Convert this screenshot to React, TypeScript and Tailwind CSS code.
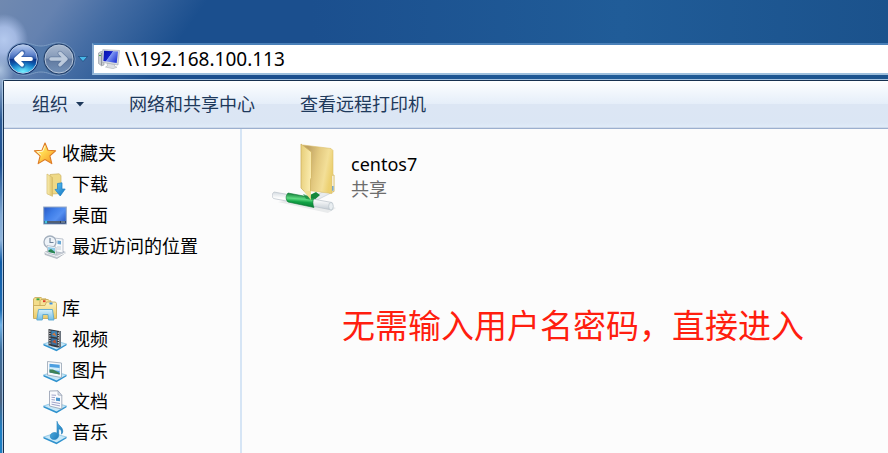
import React from "react";

function BackButton() {
  return (
    <button type="button" aria-label="后退" className="relative size-[32px] shrink-0">
      <svg viewBox="0 0 32 32" className="size-full" aria-hidden="true">
        <defs>
          <linearGradient id="backBase" x1="0" y1="0" x2="0" y2="1">
            <stop offset="0" stopColor="#b9cdef" />
            <stop offset="0.3" stopColor="#6d8fd2" />
            <stop offset="0.48" stopColor="#3a62b4" />
            <stop offset="0.5" stopColor="#0b2f86" />
            <stop offset="0.72" stopColor="#0d66b8" />
            <stop offset="1" stopColor="#3fd4f8" />
          </linearGradient>
          <radialGradient id="backGlow" cx="0.5" cy="1" r="0.5">
            <stop offset="0" stopColor="#7df4ff" />
            <stop offset="1" stopColor="#1fa5e8" stopOpacity="0" />
          </radialGradient>
        </defs>
        <circle cx="16" cy="16" r="15.5" fill="#17336a" />
        <circle cx="16" cy="16" r="14.2" fill="url(#backBase)" stroke="#b5cbe8" strokeWidth="1" />
        <circle cx="16" cy="16" r="13.5" fill="url(#backGlow)" />
        <path d="M25 16H9M15.5 9.5 8.8 16l6.7 6.5" fill="none" stroke="#1c4a94" strokeWidth="5.4" strokeLinecap="round" strokeLinejoin="round" opacity="0.5" />
        <path d="M24 16H9.5M15 10.3 9 16l6 5.7" fill="none" stroke="#fff" strokeWidth="3.8" strokeLinecap="round" strokeLinejoin="round" />
      </svg>
    </button>
  );
}

function ForwardButton() {
  return (
    <button type="button" aria-label="前进" className="relative size-[32px] shrink-0">
      <svg viewBox="0 0 32 32" className="size-full" aria-hidden="true">
        <defs>
          <linearGradient id="fwdBase" x1="0" y1="0" x2="0" y2="1">
            <stop offset="0" stopColor="#a9b9cf" />
            <stop offset="0.47" stopColor="#8499b8" />
            <stop offset="0.5" stopColor="#61799f" />
            <stop offset="1" stopColor="#7391b8" />
          </linearGradient>
        </defs>
        <circle cx="16" cy="16" r="15.5" fill="#28456f" />
        <circle cx="16" cy="16" r="14" fill="url(#fwdBase)" stroke="#b7c6da" strokeWidth="1" />
        <path d="M8 16H23M17 10.300 23 16l-6 5.700" fill="none" stroke="#516b92" strokeWidth="5" strokeLinecap="round" strokeLinejoin="round" opacity="0.6" />
        <path d="M8 16H23M17 10.300 23 16l-6 5.700" fill="none" stroke="#bccadc" strokeWidth="3.500" strokeLinecap="round" strokeLinejoin="round" />
      </svg>
    </button>
  );
}

function ComputerIcon() {
  return (
    <svg viewBox="0 0 22 20" className="h-[20px] w-[22px] shrink-0" aria-hidden="true">
      <defs>
        <linearGradient id="pcScreen" x1="0" y1="0" x2="1" y2="0.6">
          <stop offset="0" stopColor="#0712a8" />
          <stop offset="0.48" stopColor="#1220cc" />
          <stop offset="0.52" stopColor="#7f98f2" />
          <stop offset="1" stopColor="#2a3fd8" />
        </linearGradient>
      </defs>
      <path d="M0.500 4 3 2.500 6 3v13l-2.500.8L.5 14.500z" fill="#c9cdd2" stroke="#8d949c" strokeWidth="0.6" />
      <path d="M3.500 4v12.500" stroke="#777e86" strokeWidth="0.7" />
      <path d="M1 6.500h2" stroke="#4fa84a" />
      <path d="M9 14 16.500 15.200v2l2.500 1-4 1.500-7.500-1.600 2-1.500z" fill="#dcdfe3" stroke="#a2a8af" strokeWidth="0.5" />
      <path d="M4.800.6 21.500 1.500 20 16 4 13.300z" fill="#d6dae0" stroke="#a2a9b3" strokeWidth="0.6" />
      <path d="M6 1.800 20 2.600 18.700 13.900 5.400 11.900z" fill="url(#pcScreen)" />
    </svg>
  );
}

function StarIcon() {
  return (
    <svg viewBox="0 0 24 24" className="size-6" aria-hidden="true">
      <defs>
        <linearGradient id="starFill" x1="0" y1="0" x2="1" y2="1">
          <stop offset="0" stopColor="#fff3a8" />
          <stop offset="0.45" stopColor="#ffd84f" />
          <stop offset="1" stopColor="#f58a1c" />
        </linearGradient>
      </defs>
      <path d="M12 1 15 8.200 22.600 8.800 16.900 13.900 18.800 21.600 12 17.500 5.200 21.600 7.100 13.900 1.400 8.800 9 8.200z" fill="url(#starFill)" stroke="#dd7b24" strokeWidth="1.100" strokeLinejoin="round" />
      <path d="M12 3.800 9.700 9.200 4.300 9.700 8.200 13.400" fill="none" stroke="#fffbe0" strokeWidth="0.900" />
    </svg>
  );
}

function DownloadsIcon() {
  return (
    <svg viewBox="0 0 24 24" className="size-6" aria-hidden="true">
      <defs>
        <linearGradient id="dlFront" x1="0" y1="0" x2="1" y2="0">
          <stop offset="0" stopColor="#fbf0b5" />
          <stop offset="1" stopColor="#ddc065" />
        </linearGradient>
        <linearGradient id="dlArrow" x1="0" y1="0" x2="1" y2="1">
          <stop offset="0" stopColor="#5ec5f6" />
          <stop offset="1" stopColor="#1173c1" />
        </linearGradient>
      </defs>
      <path d="M7 1.500 16 .8 18 2.500V20.500L9 21z" fill="#efd986" stroke="#ccb164" strokeWidth="0.700" />
      <path d="M4 1 9.500 4.500V23.300L4 20.800z" fill="url(#dlFront)" stroke="#d2b968" strokeWidth="0.700" />
      <path d="M14.500 10.500 19 9.800V16h3.200l-5 7-5.200-6.500 2.500-.3z" fill="url(#dlArrow)" stroke="#1d7ec3" strokeWidth="0.700" strokeLinejoin="round" />
    </svg>
  );
}

function DesktopIcon() {
  return (
    <svg viewBox="0 0 24 24" className="size-6" aria-hidden="true">
      <defs>
        <linearGradient id="deskFill" x1="0" y1="0" x2="1" y2="0.7">
          <stop offset="0" stopColor="#2858c3" />
          <stop offset="0.4" stopColor="#3f7ee8" />
          <stop offset="0.7" stopColor="#5590f2" />
          <stop offset="1" stopColor="#3264cd" />
        </linearGradient>
      </defs>
      <rect x="0.700" y="3" width="22.600" height="17" fill="url(#deskFill)" stroke="#95a8c4" />
      <rect x="1.200" y="17" width="21.600" height="2.500" fill="#303c51" />
      <path d="M5 18h12" stroke="#71839c" />
      <circle cx="3" cy="18" r="1.500" fill="#46c4de" />
      <path d="M18 18h4" stroke="#9db2cb" />
    </svg>
  );
}

function RecentIcon() {
  return (
    <svg viewBox="0 0 24 24" className="size-6" aria-hidden="true">
      <path d="M2 17 13 14l10 3.500L14 23.500 2 19.500z" fill="#c9ced5" stroke="#99a1ac" strokeWidth="0.600" />
      <path d="M2 17.500 14 21.500 23 17.500" fill="none" stroke="#f4f6f8" />
      <path d="M11 3 20 4v14l-9-1.500z" fill="#f7f9fb" stroke="#a4aebb" strokeWidth="0.700" />
      <path d="M14.500 5.500 18 6v3.500l-3.500-.5z" fill="#68a7d4" />
      <path d="M14 12h4M14 14h4" stroke="#b5c1ce" strokeWidth="0.800" />
      <circle cx="7" cy="7" r="6" fill="#eef3f8" stroke="#a3afbd" strokeWidth="1.300" />
      <path d="M7 3v4.500h3.500" fill="none" stroke="#6f839a" strokeWidth="1.100" />
      <path d="M4 10.500 13 12v8L5 18z" fill="#fbfcfd" stroke="#a4aebb" strokeWidth="0.700" />
      <path d="M5 12 12 13v5.500L5.500 17z" fill="#8fcbe9" />
      <path d="M5.300 15.500 8 14l4 3v1.500l-6.500-1.500z" fill="#2b8550" />
    </svg>
  );
}

function LibraryIcon() {
  return (
    <svg viewBox="0 0 24 24" className="size-6" aria-hidden="true">
      <defs>
        <linearGradient id="libFront" x1="0" y1="0" x2="0" y2="1">
          <stop offset="0" stopColor="#fdf3bc" />
          <stop offset="1" stopColor="#ebca67" />
        </linearGradient>
        <linearGradient id="libStand" x1="0" y1="0" x2="0" y2="1">
          <stop offset="0" stopColor="#d9f1fb" />
          <stop offset="1" stopColor="#72bde5" />
        </linearGradient>
      </defs>
      <path d="M.5 1.800 2 .5h6l1.500 1.300H13V20H.5z" fill="#f3dd8b" stroke="#c5a451" strokeWidth="0.800" />
      <path d="M7 3.800 8 2.500h7l1.500 1.300H18v15H7z" fill="#f6e296" stroke="#c5a451" strokeWidth="0.800" />
      <path d="M.5 8.500H12L13.500 5h9l1 1.500V21.500H.5z" fill="url(#libFront)" stroke="#c5a451" strokeWidth="0.800" />
      <path d="M3.500 2.300h3" stroke="#38a648" strokeWidth="1.900" />
      <path d="M10 4.200h2.500" stroke="#de3d2b" strokeWidth="1.900" />
      <path d="M16.500 6.500h3" stroke="#3d8fe0" strokeWidth="1.900" />
      <path d="M5.500 12.500h14L21 23h-5.500l-.5-5.500H9.800L9.300 23H3.800z" fill="url(#libStand)" stroke="#5ba8d1" strokeWidth="0.900" strokeLinejoin="round" />
    </svg>
  );
}

function Tray() {
  return (
    <>
      <path d="M.5 16 11 12.500 23.500 16 13.500 22z" fill="#c8e8f8" stroke="#7bbbe0" strokeWidth="0.700" />
      <path d="M.5 16 13.500 21.500 23.500 16v1.200L13.500 23.300.5 17.500z" fill="#2f92ce" />
    </>
  );
}

function VideoIcon() {
  return (
    <svg viewBox="0 0 24 24" className="size-6" aria-hidden="true">
      <Tray />
      <path d="M5.500 1 16.500 3V20L5.500 17.500z" fill="#34383f" />
      <path d="M8.300 2.500 14 3.500V9.500L8.300 8.500z" fill="#3d83b6" />
      <path d="M8.300 10 14 11v6.500l-5.700-1.200z" fill="#3c719f" />
      <path d="M9 6.500 11.500 4.500 13.500 8.500z" fill="#d1783d" />
      <path d="M9 14 12 11.500 13.500 15.500z" fill="#bd5430" />
      <path d="M6.900 2.500v15M15.300 4.500v15" stroke="#eef2f5" strokeWidth="1.100" strokeDasharray="1.200 1.200" />
      <path d="M16.500 3 18 3v16l-1.500 1z" fill="#6b737d" />
    </svg>
  );
}

function PicturesIcon() {
  return (
    <svg viewBox="0 0 24 24" className="size-6" aria-hidden="true">
      <Tray />
      <path d="M4.500 2.500 18.500 4V18.500L4.500 16z" fill="#f8fafc" stroke="#95a3b3" strokeWidth="0.800" />
      <path d="M6.500 4.700 16.700 5.800V15.500L6.500 13.500z" fill="#4d9fe0" />
      <path d="M6.500 8 16.700 9v3L6.500 10.500z" fill="#d3eefa" />
      <path d="M6.500 10.500 10 10.500 16.700 14v1.500L6.500 13.500z" fill="#3f8257" />
    </svg>
  );
}

function DocumentsIcon() {
  return (
    <svg viewBox="0 0 24 24" className="size-6" aria-hidden="true">
      <Tray />
      <path d="M6.500 1 15 .8 18.800 5.500V19L6.500 16z" fill="#f9fafd" stroke="#929caf" strokeWidth="0.800" />
      <path d="M15 .8V5l3.800.5z" fill="#dce3ed" stroke="#929caf" strokeWidth="0.600" />
      <path d="M8.500 5 13 5.300M8.500 7.300 12 7.600M8.500 9.600 12 10M8.500 12 17 13.500M8.500 14.200 17 15.900" stroke="#9499c2" strokeWidth="0.900" />
      <path d="M13 7.500 17 8v3.300l-4-.5z" fill="#4b96cd" />
    </svg>
  );
}

function MusicIcon() {
  return (
    <svg viewBox="0 0 24 24" className="size-6" aria-hidden="true">
      <defs>
        <linearGradient id="noteFill" x1="0" y1="0" x2="1" y2="1">
          <stop offset="0" stopColor="#64c3f0" />
          <stop offset="1" stopColor="#126cae" />
        </linearGradient>
      </defs>
      <Tray />
      <path d="M14 .3C14.500 4.500 19.800 5.500 19.800 10c0 1.500-.5 2.500-1.300 3.200.5-3.700-1-5-2.800-5.500V14c0 2.800-2 4.500-4.500 4.500-2.500 0-4.200-1.500-3.900-3.700.3-2.200 2.500-3.500 4.700-3.200.8 0 1.500.3 2 .6z" fill="url(#noteFill)" stroke="#1f7fbd" strokeWidth="0.600" />
    </svg>
  );
}

function SharedFolderIcon() {
  return (
    <svg viewBox="0 0 64 72" className="h-[72px] w-16 shrink-0" aria-hidden="true">
      <defs>
        <linearGradient id="shBack" x1="0" y1="0.1" x2="1" y2="0.4">
          <stop offset="0.15" stopColor="#bfa264" />
          <stop offset="0.5" stopColor="#e3c97f" />
          <stop offset="0.8" stopColor="#f3df98" />
          <stop offset="1" stopColor="#ecd070" />
        </linearGradient>
        <linearGradient id="shFront" x1="0" y1="0" x2="1" y2="0.3">
          <stop offset="0" stopColor="#e6cd78" />
          <stop offset="1" stopColor="#faebad" />
        </linearGradient>
        <linearGradient id="shPipe" x1="0.1" y1="0" x2="0" y2="1">
          <stop offset="0" stopColor="#d4dbe1" />
          <stop offset="0.35" stopColor="#ffffff" />
          <stop offset="1" stopColor="#b8c2cb" />
        </linearGradient>
        <linearGradient id="shGreen" x1="0.15" y1="0" x2="0" y2="1">
          <stop offset="0" stopColor="#0f7a35" />
          <stop offset="0.35" stopColor="#5fdb82" />
          <stop offset="0.55" stopColor="#12a346" />
          <stop offset="1" stopColor="#04692a" />
        </linearGradient>
      </defs>
      <path d="M6 61 56 72 64 67 36 56z" fill="#7a858d" opacity="0.14" />
      <path d="M38 57 54 49.500 59 52 42 60.500z" fill="#e8ecef" stroke="#c1c8ce" strokeWidth="0.600" />
      <path d="M36 55 44 51 48 54 40 61z" fill="#16873d" />
      <path d="M58 34h4v16.500L57 52z" fill="#fff" stroke="#d4b554" strokeWidth="0.900" />
      <path d="M59 45h2.500v4.500l-2.500.8z" fill="#5b9fe3" />
      <path d="M31 4 59 7.500 61 9.500V33l-1 2V52.500L36.500 49.500z" fill="url(#shBack)" stroke="#dcc06c" strokeWidth="0.600" />
      <path d="M29 3 39.500 11V36.500l-1 2V57L29 47z" fill="url(#shFront)" stroke="#cfb261" strokeWidth="0.800" />
      <path d="M2 51 60 61.500v7.500L1.500 57.500C-.5 55.500 0 52.500 2 51z" fill="url(#shPipe)" stroke="#b7c0c8" strokeWidth="0.700" />
      <ellipse cx="59" cy="65.300" rx="2.300" ry="3.800" fill="#e9eef1" stroke="#afbac3" strokeWidth="0.600" />
      <path d="M16 52 42 57C40.500 59.500 40.500 63.500 42 66.500L16 61C13.500 58.500 13.500 55 16 52z" fill="url(#shGreen)" stroke="#087530" strokeWidth="0.600" />
      <path d="M31 53 37 55 42 53 41 59 34 58z" fill="#118a3b" opacity="0.7" />
      <path d="M32 50 38.800 59V50z" fill="#f2df95" />
    </svg>
  );
}

type NavItem = { label: string; icon: React.ReactNode };
type NavGroup = NavItem & { children: NavItem[] };

const groups: NavGroup[] = [
  {
    label: "收藏夹",
    icon: <StarIcon />,
    children: [
      { label: "下载", icon: <DownloadsIcon /> },
      { label: "桌面", icon: <DesktopIcon /> },
      { label: "最近访问的位置", icon: <RecentIcon /> },
    ],
  },
  {
    label: "库",
    icon: <LibraryIcon />,
    children: [
      { label: "视频", icon: <VideoIcon /> },
      { label: "图片", icon: <PicturesIcon /> },
      { label: "文档", icon: <DocumentsIcon /> },
      { label: "音乐", icon: <MusicIcon /> },
    ],
  },
];

function AddressBar() {
  return (
    <header className="flex items-center bg-[radial-gradient(ellipse_24px_26px_at_4px_40px,#b4c9ee_0%,#a3b9e2_50%,transparent_100%),radial-gradient(ellipse_14px_20px_at_0px_70px,#a9c0de_0%,transparent_100%),linear-gradient(125deg,#7089b0_0px,#6582b0_50px,#456da4_95px,transparent_170px),linear-gradient(to_right,#1b4f8e_0%,#1b4f8e_35%,#205c98_70%,#1b528c_100%)] pt-[43px] pb-[4px] pl-[7px]">
      <div className="relative flex items-center gap-[4px]">
        <svg viewBox="0 0 70 34" className="absolute -top-px -left-px h-[34px] w-[70px]" aria-hidden="true">
          <path
            d="M17 .8C25 .8 28 4 35 4S45 .8 53 .8a16.200 16.200 0 0 1 0 32.400C45 33.200 42 30 35 30S25 33.200 17 33.200A16.200 16.200 0 0 1 17 .8z"
            fill="#4d77a9"
            fillOpacity="0.6"
            stroke="#7d9cc3"
            strokeWidth="1"
          />
        </svg>
        <BackButton />
        <ForwardButton />
      </div>
      <button type="button" aria-label="最近浏览的位置" className="flex h-8 w-[17px] items-center justify-center pr-[2px]">
        <svg viewBox="0 0 10 6" className="h-[6px] w-[10px] shrink-0" aria-hidden="true">
          <path d="M.5.5h9L5 5.500z" fill="#48b8e8" stroke="#14396b" strokeWidth="0.600" />
        </svg>
      </button>
      <div className="flex h-8 flex-1 items-center gap-[5px] border-y-2 border-l-2 border-t-[#4a80b8] border-b-[#9dbfdd] border-l-[#86abd2] bg-white pl-[4px]">
        <ComputerIcon />
        <input
          type="text"
          aria-label="地址"
          defaultValue={"\\\\192.168.100.113"}
          className="min-w-0 flex-1 bg-transparent text-[19px] leading-[28px] text-black outline-none"
        />
      </div>
    </header>
  );
}

function Toolbar() {
  return (
    <div
      role="toolbar"
      className="flex h-12 shrink-0 items-center gap-[45px] border-b border-[#9cb0cf] bg-[linear-gradient(to_bottom,#fdfeff_0%,#e5eef9_49%,#dce6f4_50%,#dbe6f4_88%,#dfebf8_97%,#cfdaea_98%)] pb-px pl-7 text-[18px] leading-[24px] text-[#1e395b]"
    >
      <button type="button" className="flex items-center gap-2">
        组织
        <svg viewBox="0 0 8 5" className="h-[5px] w-[8px]" aria-hidden="true">
          <path d="M0 0h8L4 4.500z" fill="#1e395b" />
        </svg>
      </button>
      <button type="button">网络和共享中心</button>
      <button type="button">查看远程打印机</button>
    </div>
  );
}

function Sidebar() {
  return (
    <nav className="flex w-[238px] shrink-0 flex-col gap-[31px] border-r-2 border-[#d6e5f5] pt-[9px] text-[18px] leading-[31px] text-black">
      {groups.map((group) => (
        <ul key={group.label}>
          <li>
            <a href="#" className="flex items-center gap-[5px] pl-[29px]">
              {group.icon}
              {group.label}
            </a>
            <ul>
              {group.children.map((item) => (
                <li key={item.label}>
                  <a href="#" className="flex items-center gap-[5px] pl-[39px]">
                    {item.icon}
                    {item.label}
                  </a>
                </li>
              ))}
            </ul>
          </li>
        </ul>
      ))}
    </nav>
  );
}

export default function App() {
  return (
    <div className="flex h-screen flex-col overflow-hidden bg-[linear-gradient(to_bottom,#8fa9cc_80px,#2b5a94_120px,#1b4f92_165px,#7fa8d4_215px,#8fb4dc_240px,#0f5ca8_262px,#1c6cb4_310px,#6fb2e8_325px,#3b6d9c_350px,#4a6280_400px,#1d7fc4_430px)] font-['Noto_Sans','Noto_Sans_CJK_SC',sans-serif] font-normal">
      <AddressBar />
      <div className="ml-[2px] flex min-h-0 flex-1 rounded-tl-[3px] border-t border-l border-[#a4c2e0] bg-[#fcfcfc]">
        <div className="flex min-w-0 flex-1 flex-col rounded-tl-[2px] border-t border-l border-[#16304f]">
          <Toolbar />
          <div className="flex min-h-0 flex-1">
            <Sidebar />
            <main className="min-w-0 flex-1 pt-[12px] pl-[30px]">
              <a href="#" className="flex w-fit items-center gap-[15px]">
                <SharedFolderIcon />
                <span className="flex flex-col text-[18px] leading-[25px]">
                  <span className="text-black">centos7</span>
                  <span className="text-[#6d6d6d]">共享</span>
                </span>
              </a>
              <p className="mt-[89px] pl-[70px] text-[33px] leading-[48px] text-[#ff1e0f]">无需输入用户名密码，直接进入</p>
            </main>
          </div>
        </div>
      </div>
    </div>
  );
}
